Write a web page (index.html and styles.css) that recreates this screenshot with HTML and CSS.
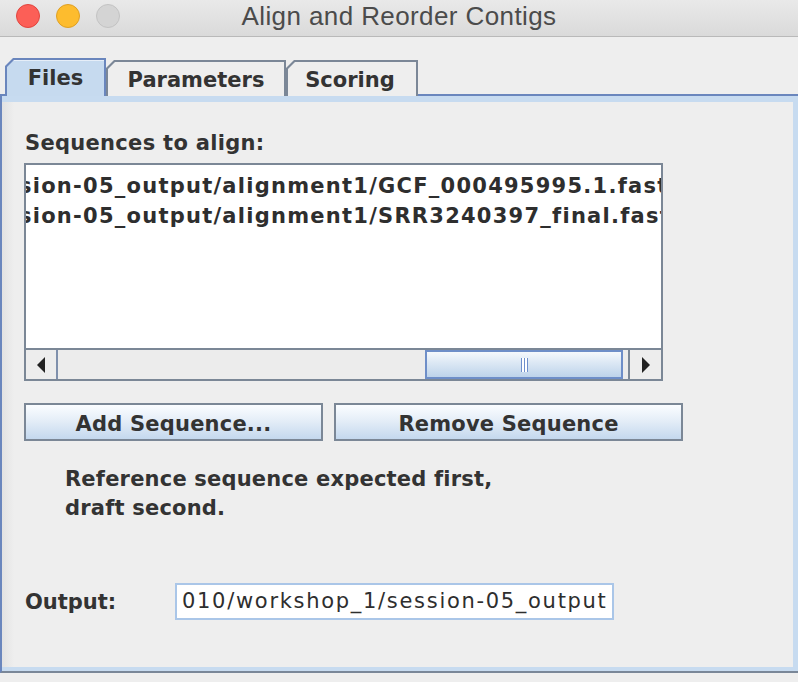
FILE: index.html
```html
<!DOCTYPE html>
<html>
<head>
<meta charset="utf-8">
<link rel="stylesheet" href="styles.css">
</head>
<body>
<div class="window">
  <header class="titlebar">
    <div class="lights">
      <span class="light red"></span>
      <span class="light yellow"></span>
      <span class="light grey"></span>
    </div>
    <div class="title">Align and Reorder Contigs</div>
    <div></div>
  </header>
  <nav class="tabs">
    <div class="tab active tab-files"><div class="tab-face">Files</div></div>
    <div class="tab tab-params"><div class="tab-face">Parameters</div></div>
    <div class="tab tab-scoring"><div class="tab-face">Scoring</div></div>
  </nav>
  <section class="panel">
    <div class="panel-inner">
      <div class="label">Sequences to align:</div>
      <div class="list">
        <div class="rows">
          <div class="row">session-05_output/alignment1/GCF_000495995.1.fasta</div>
          <div class="row">session-05_output/alignment1/SRR3240397_final.fasta</div>
        </div>
        <div class="hscroll">
          <div class="sbtn sbtn-left">
            <svg width="8" height="16" viewBox="0 0 8 16"><path d="M8 0 L0 8 L8 16 Z" fill="#222"/></svg>
          </div>
          <div class="track">
            <div class="thumb"><span class="grip"></span></div>
          </div>
          <div class="sbtn sbtn-right">
            <svg width="8" height="16" viewBox="0 0 8 16"><path d="M0 0 L8 8 L0 16 Z" fill="#222"/></svg>
          </div>
        </div>
      </div>
      <div class="buttons">
        <button class="btn btn-add">Add Sequence...</button>
        <button class="btn btn-remove">Remove Sequence</button>
      </div>
      <p class="note">Reference sequence expected first,<br>draft second.</p>
      <div class="output-row">
        <span class="out-label">Output:</span>
        <div class="field">010/workshop_1/session-05_output</div>
      </div>
    </div>
  </section>
</div>
</body>
</html>
```
FILE: styles.css
```css
html, body {
  margin: 0;
  padding: 0;
}
body {
  width: 798px;
  height: 682px;
  overflow: hidden;
  background: #eeeeee;
  font-family: "DejaVu Sans", sans-serif;
  color: #333333;
}
.titlebar {
  height: 36px;
  border-bottom: 1px solid #b9b9b9;
  background: linear-gradient(#e9e9e9, #dadada);
  display: grid;
  grid-template-columns: 1fr auto 1fr;
}
.lights {
  display: flex;
  align-items: flex-start;
  gap: 16px;
  padding: 4px 0 0 16px;
}
.light {
  width: 24px;
  height: 24px;
  border-radius: 50%;
  box-sizing: border-box;
  border: 1px solid;
}
.red { background: #fc5f57; border-color: #e1453e; }
.yellow { background: #fdbc2e; border-color: #dfa024; }
.grey { background: #d4d4d4; border-color: #c3c3c3; }
.title {
  font-family: "Liberation Sans", Arial, sans-serif;
  font-size: 26px;
  line-height: 32px;
  letter-spacing: 0.4px;
  color: #4b4b4b;
}
.tabs {
  display: flex;
  align-items: flex-end;
  height: 38px;
  margin-top: 21px;
  margin-bottom: -2px;
  padding-left: 5px;
  position: relative;
  z-index: 1;
}
.tab {
  box-sizing: border-box;
  height: 36px;
  padding: 2px 2px 0 2px;
  background: #7b8797;
  clip-path: polygon(8px 0, 100% 0, 100% 100%, 0 100%, 0 8px);
}
.tab-face {
  height: 100%;
  box-sizing: border-box;
  padding-top: 1px;
  background: #eeeeee;
  clip-path: polygon(7px 0, 100% 0, 100% 100%, 0 100%, 0 7px);
  text-align: center;
  font-weight: bold;
  font-size: 21px;
  line-height: 34px;
  color: #333333;
}
.tab.active {
  height: 38px;
  background: #6a86bd;
}
.tab.active .tab-face {
  background: linear-gradient(#e6eef8 0, #e6eef8 1px, #c6daef 1px);
}
.tab-files { width: 101px; }
.tab-params { width: 180px; }
.tab-scoring { width: 132px; }
.tab-scoring .tab-face { padding-right: 4px; }
.panel {
  border-top: 2px solid #6a86bd;
  border-left: 2px solid #6a86bd;
  border-bottom: 2px solid #7a8798;
}
.panel-inner {
  border-top: 6px solid #c7dbf0;
  border-right: 5px solid #c7dbf0;
  border-bottom: 4px solid #c7dbf0;
  padding: 28px 0 47px 22px;
  background: linear-gradient(90deg, #e2e2e2, #eeeeee 12px);
}
.label {
  font-weight: bold;
  font-size: 21px;
  line-height: 26px;
  letter-spacing: 0.3px;
  padding-left: 1px;
}
.list {
  width: 639px;
  height: 218px;
  box-sizing: border-box;
  margin-top: 7px;
  border: 2px solid #7b8796;
  background: #ffffff;
  display: flex;
  flex-direction: column;
}
.rows {
  flex: 1;
  overflow: hidden;
  padding-top: 6px;
}
.row {
  white-space: nowrap;
  font-weight: bold;
  font-size: 21px;
  line-height: 30px;
  letter-spacing: 1.25px;
  text-indent: -50px;
  color: #2e2e2e;
}
.hscroll {
  height: 31px;
  box-sizing: border-box;
  border-top: 2px solid #7b8796;
  display: flex;
}
.sbtn {
  background: #ededed;
  display: flex;
  align-items: center;
  justify-content: center;
}
.sbtn-left {
  width: 30px;
  border-right: 2px solid #7f90ac;
}
.sbtn-right {
  width: 31px;
  border-left: 2px solid #7b8796;
}
.track {
  flex: 1;
  background: #ececec;
  display: flex;
}
.thumb {
  width: 198px;
  margin-left: auto;
  margin-right: 5px;
  box-sizing: border-box;
  border: 2px solid #6e8ec8;
  background: linear-gradient(#f5f8fc, #dbe7f4 45%, #bdd3ea);
  display: flex;
  align-items: center;
  justify-content: center;
}
.grip {
  width: 7px;
  height: 14px;
  background: repeating-linear-gradient(90deg, #6f8fcc 0, #6f8fcc 1px, #ffffff 1px, #ffffff 3px);
}
.buttons {
  display: flex;
  gap: 11px;
  margin-top: 22px;
}
.btn {
  height: 38px;
  box-sizing: border-box;
  border: 2px solid #7b8796;
  background: linear-gradient(#fbfdff, #e2ecf7 50%, #c4d8ee);
  font-family: "DejaVu Sans", sans-serif;
  font-weight: bold;
  font-size: 21px;
  letter-spacing: 0.2px;
  color: #333333;
  padding: 3px 0 0 0;
}
.btn-add { width: 299px; }
.btn-remove { width: 349px; }
.note {
  margin: 24px 0 0 41px;
  font-weight: bold;
  font-size: 21px;
  line-height: 29px;
  letter-spacing: 0.2px;
}
.output-row {
  display: flex;
  align-items: center;
  margin-top: 60px;
  height: 37px;
}
.out-label {
  width: 150px;
  font-weight: bold;
  font-size: 21px;
  padding-left: 1px;
}
.field {
  width: 439px;
  height: 37px;
  box-sizing: border-box;
  border: 2px solid #aac6e8;
  background: #ffffff;
  padding-left: 5px;
  font-size: 21px;
  line-height: 33px;
  letter-spacing: 1.7px;
  white-space: nowrap;
  overflow: hidden;
  color: #2e2e2e;
}
```
